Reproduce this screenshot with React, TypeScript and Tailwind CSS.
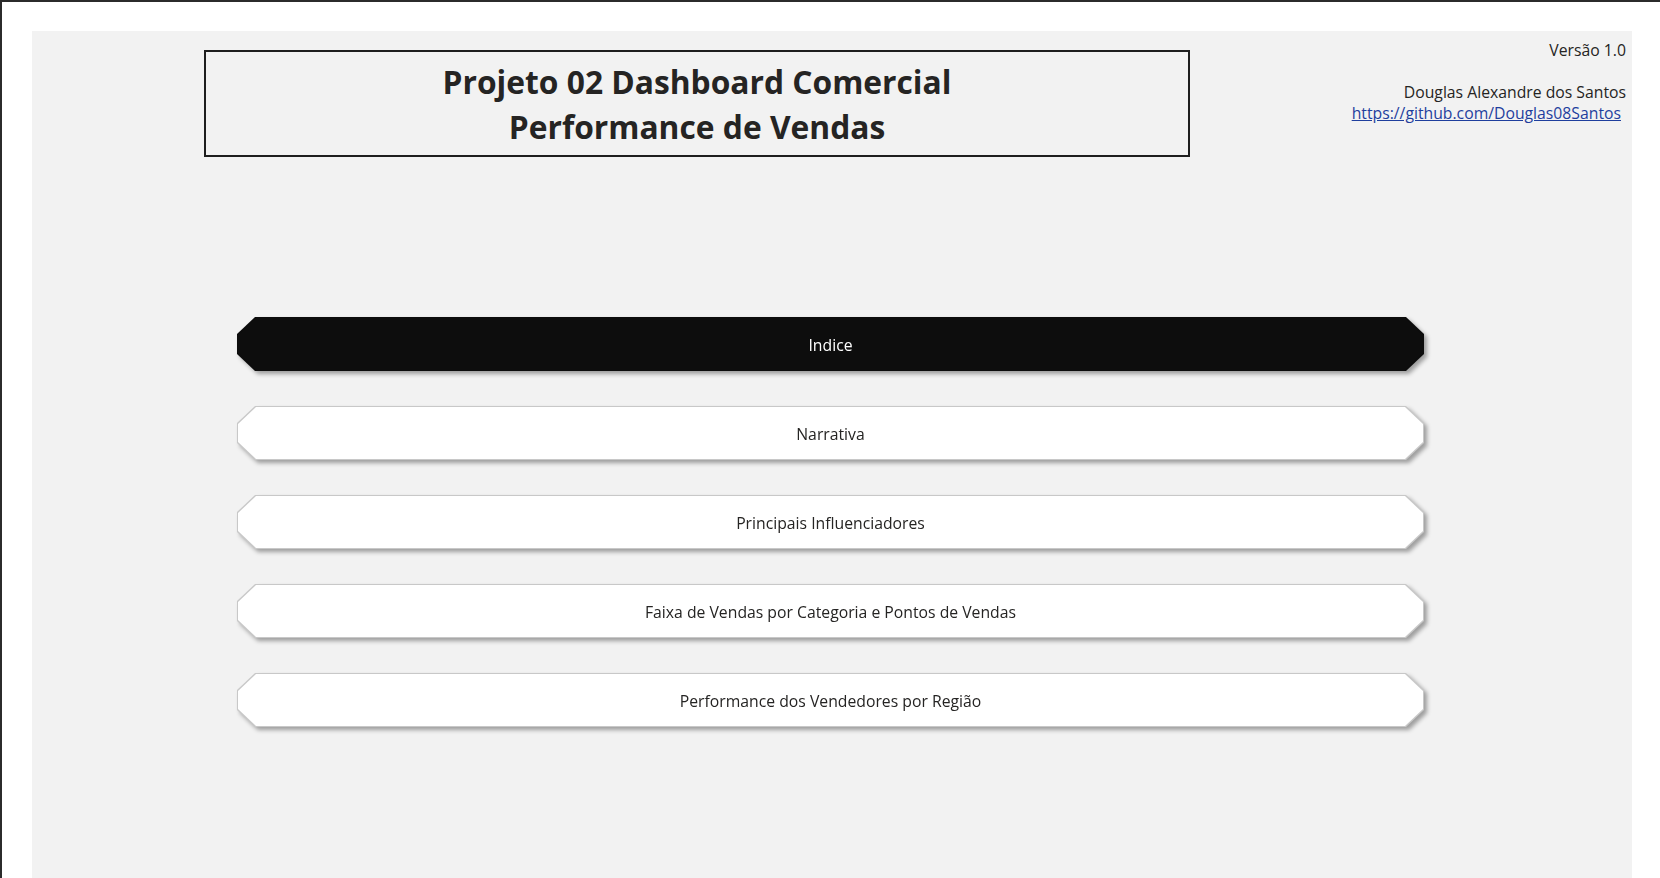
import React from "react"

const pages = [
  "Indice",
  "Narrativa",
  "Principais Influenciadores",
  "Faixa de Vendas por Categoria e Pontos de Vendas",
  "Performance dos Vendedores por Região",
]

const chamfer =
  "[clip-path:polygon(18px_0,calc(100%_-_18px)_0,100%_17px,100%_calc(100%_-_17px),calc(100%_-_18px)_100%,18px_100%,0_calc(100%_-_17px),0_17px)]"

function NavButton({ label, active }: { label: string; active?: boolean }) {
  return (
    <div className="[filter:drop-shadow(3px_3px_2px_rgba(0,0,0,0.35))]">
      <div className={`${chamfer} h-[54px] p-px ${active ? "bg-[#0d0d0d]" : "bg-[#c8c8c8]"}`}>
        <div
          className={`${chamfer} flex h-full items-center justify-center pt-[3px] text-[15.75px] ${
            active ? "bg-[#0d0d0d] text-white" : "bg-white text-[#252423]"
          }`}
        >
          {label}
        </div>
      </div>
    </div>
  )
}

export default function App() {
  return (
    <div
      className="h-[878px] w-full overflow-hidden border-l-2 border-t-2 border-[#2b2b2b] bg-white pl-[30px] pt-[29px]"
      style={{ fontFamily: '"Open Sans", "Noto Sans", sans-serif' }}
    >
      <div className="h-full w-[1600px] bg-[#f2f2f2]">
        {/* Header */}
        <div className="flex">
          <div className="ml-[172px] mt-[19px] flex h-[107px] w-[986px] flex-col items-center justify-center border-2 border-[#1e1e1e] pt-px text-[31.75px] font-bold leading-[45px] text-[#252423]">
            <span>Projeto 02 Dashboard Comercial</span>
            <span>Performance de Vendas</span>
          </div>
          <div className="ml-auto pr-[6px] pt-[9px] text-right text-[15.75px] leading-[21px] text-[#252423]">
            <div>Versão 1.0</div>
            <div className="mt-[21px]">Douglas Alexandre dos Santos</div>
            <a href="#" className="mr-[5px] block text-[#1f3f9e] underline">
              https://github.com/Douglas08Santos
            </a>
          </div>
        </div>

        {/* Navigation */}
        <div className="ml-[205px] mt-[160px] flex w-[1187px] flex-col gap-[35px]">
          {pages.map((p, i) => (
            <NavButton key={p} label={p} active={i === 0} />
          ))}
        </div>
      </div>
    </div>
  )
}
